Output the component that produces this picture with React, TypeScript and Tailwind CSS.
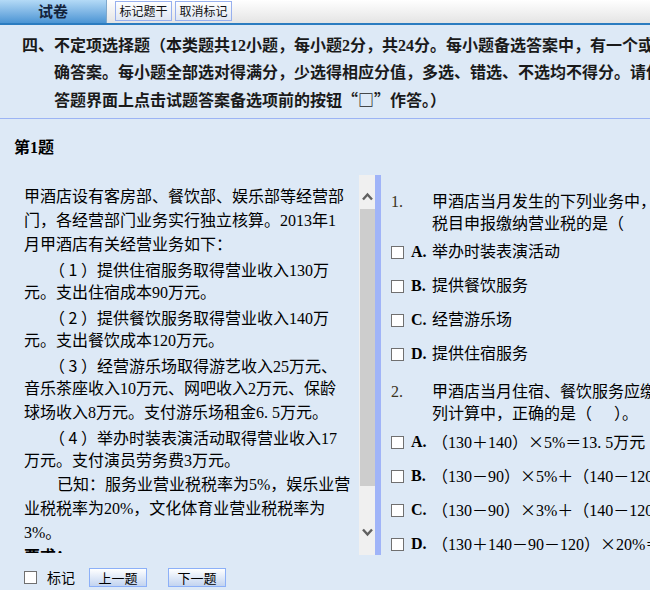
import React from "react";

const serif = "[font-family:'Liberation_Serif','Noto_Sans_CJK_SC',serif]";

function FW({ c, align }: { c: string; align: "l" | "c" | "r" }) {
  const a = align === "l" ? "text-left" : align === "r" ? "text-right" : "text-center";
  return (
    <span className={`inline-block w-[16px] ${a} [font-family:'Noto_Sans_CJK_SC',sans-serif]`}>{c}</span>
  );
}

const X = () => <FW c="×" align="c" />;

// one text line of fixed height, so mixed fonts don't stretch it
function L({ children, indent }: { children: React.ReactNode; indent?: "a" | "b" }) {
  const pad = indent === "a" ? "pl-[25px]" : indent === "b" ? "pl-[33px]" : "";
  return <div className={`h-[24px] leading-[24px] ${pad}`}>{children}</div>;
}

function Box() {
  return <span className="inline-block w-[13px] h-[13px] shrink-0 border border-[#707070] bg-white" />;
}

function Option({ letter, children }: { letter: string; children: React.ReactNode }) {
  return (
    <div className="flex items-center h-[34px] whitespace-nowrap">
      <Box />
      <span className="ml-[7px] w-[21px] shrink-0 font-bold leading-[20px]">{letter}.</span>
      <span className="leading-[20px]">{children}</span>
    </div>
  );
}

function Question({ n, lines }: { n: number; lines: React.ReactNode[] }) {
  return (
    <div className="flex whitespace-nowrap">
      <span className="w-[41px] h-[22px] leading-[22px] shrink-0 text-[#3a3320]">{n}.</span>
      <div>
        {lines.map((l, i) => (
          <div key={i} className="h-[22px] leading-[22px]">
            {l}
          </div>
        ))}
      </div>
    </div>
  );
}

function ScrollBar() {
  return (
    <div className="w-[16px] shrink-0 bg-[#f0f0f0] flex flex-col">
      <div className="h-[34px] flex items-end justify-center pb-[8px]">
        <svg width="11" height="9" viewBox="0 0 11 9">
          <polyline points="1,7.5 5.5,2.5 10,7.5" fill="none" stroke="#606060" strokeWidth="2.4" />
        </svg>
      </div>
      <div className="h-[277px] bg-[#cdcdcd] ml-[1px]" />
      <div className="flex-1" />
      <div className="h-[34px] flex items-start justify-center pt-[7px]">
        <svg width="11" height="9" viewBox="0 0 11 9">
          <polyline points="1,1.5 5.5,6.5 10,1.5" fill="none" stroke="#606060" strokeWidth="2.4" />
        </svg>
      </div>
    </div>
  );
}

export default function App() {
  return (
    <div className={`w-[650px] h-[590px] overflow-hidden bg-[#dde9f6] text-black ${serif}`}>
      {/* top bar */}
      <div className="h-[25px] flex border-b-[2px] border-[#2b7cc0] bg-gradient-to-b from-white to-[#e4e4e4]">
        <div className="w-[107px] h-full flex items-center justify-center bg-gradient-to-b from-[#b4daf6] to-[#4b95d4] border-r border-[#7fa8cc] text-[15px] font-bold text-[#13233a] [font-family:'Noto_Sans_CJK_SC',sans-serif]">
          试卷
        </div>
        <div className="flex items-start pt-[1px] pl-[8px] gap-[3px]">
          <button className="h-[20px] w-[57px] border border-[#98b0ee] bg-gradient-to-b from-white to-[#dfe6f2] text-[12px] leading-none text-[#111] [font-family:'Noto_Sans_CJK_SC',sans-serif]">
            标记题干
          </button>
          <button className="h-[20px] w-[57px] border border-[#98b0ee] bg-gradient-to-b from-white to-[#dfe6f2] text-[12px] leading-none text-[#111] [font-family:'Noto_Sans_CJK_SC',sans-serif]">
            取消标记
          </button>
        </div>
      </div>

      {/* instructions */}
      <div className="pt-[7px] pb-[5px] pl-[22px] border-b border-[#9cb4f4] text-[16px] font-bold text-[#1a1a1a] whitespace-nowrap">
        <div className="h-[27px] leading-[27px]">四、不定项选择题（本类题共12小题，每小题2分，共24分。每小题备选答案中，有一个或一个以上符合题意的正</div>
        <div className="h-[27px] leading-[27px] pl-[32px]">确答案。每小题全部选对得满分，少选得相应分值，多选、错选、不选均不得分。请使用鼠标在计算机</div>
        <div className="h-[27px] leading-[27px] pl-[32px]">
          答题界面上点击试题答案备选项前的按钮<FW c="“" align="r" />
          <FW c="□" align="c" />
          <FW c="”" align="l" />作答。）
        </div>
      </div>

      <div className="mt-[17px] pl-[14px] text-[16px] h-[24px] leading-[24px] font-bold">第1题</div>

      {/* question area */}
      <div className="mt-[15px] h-[380px] flex">
        <div className="w-[359px] h-[378px] shrink-0 overflow-hidden pl-[24px] pt-[10px] text-[16px] whitespace-nowrap">
          <L>甲酒店设有客房部、餐饮部、娱乐部等经营部</L>
          <L>门，各经营部门业务实行独立核算。2013年1</L>
          <L>月甲酒店有关经营业务如下：</L>
          <L indent="a">
            （<FW c="1" align="c" />）提供住宿服务取得营业收入130万
          </L>
          <L>元。支出住宿成本90万元。</L>
          <L indent="a">
            （<FW c="2" align="c" />）提供餐饮服务取得营业收入140万
          </L>
          <L>元。支出餐饮成本120万元。</L>
          <L indent="a">
            （<FW c="3" align="c" />）经营游乐场取得游艺收入25万元、
          </L>
          <L>音乐茶座收入10万元、网吧收入2万元、保龄</L>
          <L>球场收入8万元。支付游乐场租金6. 5万元。</L>
          <L indent="a">
            （<FW c="4" align="c" />）举办时装表演活动取得营业收入17
          </L>
          <L>万元。支付演员劳务费3万元。</L>
          <L indent="b">已知：服务业营业税税率为5%，娱乐业营</L>
          <L>业税税率为20%，文化体育业营业税税率为</L>
          <L>3%。</L>
          <L>
            <span className="font-bold">要求：</span>
          </L>
        </div>

        <ScrollBar />
        <div className="w-[6px] shrink-0 bg-[#a0b4f8]" />

        <div className="flex-1 overflow-hidden pl-[10px] pt-[16px] text-[16px]">
          <Question
            n={1}
            lines={["甲酒店当月发生的下列业务中，应按照“文化体育业”", "税目申报缴纳营业税的是（　　）。"]}
          />
          <Option letter="A">举办时装表演活动</Option>
          <Option letter="B">提供餐饮服务</Option>
          <Option letter="C">经营游乐场</Option>
          <Option letter="D">提供住宿服务</Option>

          <div className="mt-[10px]">
            <Question
              n={2}
              lines={[
                "甲酒店当月住宿、餐饮服务应缴纳营业税的下",
                <>
                  列计算中，正确的是（<span className="inline-block w-[22px]" />）。
                </>,
              ]}
            />
          </div>
          <Option letter="A">
            （130＋140）<X />5%＝13. 5万元
          </Option>
          <Option letter="B">
            （130－90）<X />5%＋（140－120）<X />5%＝3万元
          </Option>
          <Option letter="C">
            （130－90）<X />3%＋（140－120）<X />3%＝1. 8万元
          </Option>
          <Option letter="D">
            （130＋140－90－120）<X />20%＝12万元
          </Option>
        </div>
      </div>

      {/* bottom */}
      <div className="flex items-center pl-[24px] pt-[13px]">
        <Box />
        <span className="ml-[10px] text-[14px] leading-[19px] [font-family:'Noto_Sans_CJK_SC',sans-serif]">标记</span>
        <button className="ml-[14px] h-[19px] w-[58px] border border-[#8cb0f8] bg-gradient-to-b from-white to-[#c2d4f0] text-[13px] leading-none [font-family:'Noto_Sans_CJK_SC',sans-serif]">
          上一题
        </button>
        <button className="ml-[21px] h-[19px] w-[58px] border border-[#8cb0f8] bg-gradient-to-b from-white to-[#c2d4f0] text-[13px] leading-none [font-family:'Noto_Sans_CJK_SC',sans-serif]">
          下一题
        </button>
      </div>
    </div>
  );
}
